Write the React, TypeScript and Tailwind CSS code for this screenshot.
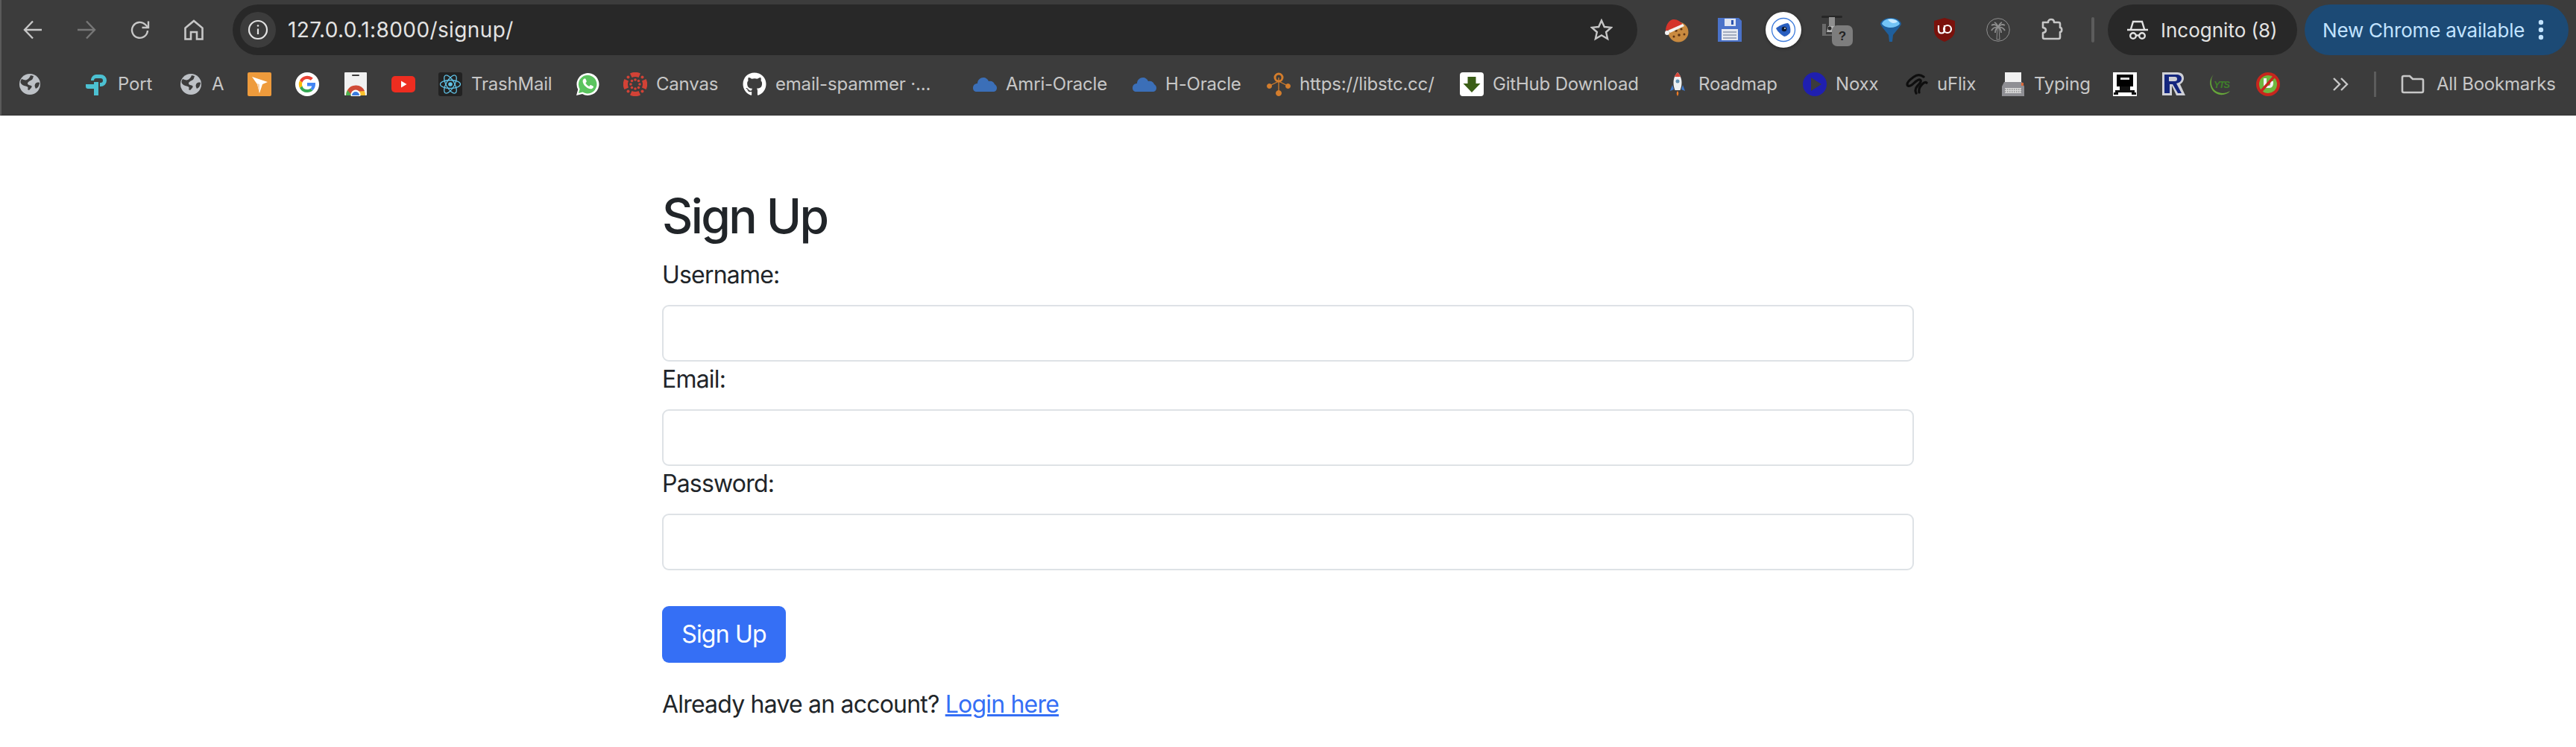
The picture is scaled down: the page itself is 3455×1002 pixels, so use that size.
import React from "react";
import { FaGithub } from "react-icons/fa";

const Globe = () => (
  <svg width="32" height="32" viewBox="0 0 32 32">
    <circle cx="16" cy="16" r="14" fill="#bdc1c6" />
    <path d="M5 9c3 1 5 2 7 1s4-3 5-6l4 1c-1 3-1 5-4 6-2 1-4 2-4 4s3 2 5 3-1 4-3 6l-2-1c1-2 1-3-1-4s-5-1-7-3-2-4 0-7z" fill="#3c3c3c" />
    <path d="M29 14c-3-1-5 0-6 2s0 4 1 6l3-2c1-2 2-4 2-6z" fill="#3c3c3c" />
  </svg>
);
const TpLink = () => (
  <svg width="32" height="32" viewBox="0 0 32 32">
    <path d="M15 3h6a8 8 0 0 1 8 8v0a8 8 0 0 1-8 8h-1v-5h1a3 3 0 0 0 0-6h-6z" fill="#4cc1d2" />
    <path d="M15 3h0v5c-2 0-3 1-3 3H8c0-4 3-8 7-8z" fill="#4cc1d2" />
    <path d="M1 16h11v-3h6v18h-6V22H4a3 3 0 0 1-3-3z" fill="#4cc1d2" />
  </svg>
);
const Orange = () => (
  <svg width="32" height="32" viewBox="0 0 32 32">
    <rect width="32" height="32" rx="2" fill="#ee9b3c" />
    <path d="M6 6l21 7-7 3-4 12-3-12z" fill="#fff" />
    <path d="M16 16l-3-1 3 13z" fill="#f6d3ad" />
  </svg>
);
const Google = () => (
  <svg width="32" height="32" viewBox="0 0 32 32">
    <circle cx="16" cy="16" r="16" fill="#fff" />
    <path d="M16 9a7 7 0 0 1 4.800 1.800l3-3A11.300 11.300 0 0 0 6 11l3.400 2.700A7 7 0 0 1 16 9z" fill="#ea4335" />
    <path d="M9.400 18.400L6 21a11.300 11.300 0 0 1 0-10l3.400 2.700a7 7 0 0 0 0 4.700z" fill="#fbbc05" />
    <path d="M16 23a7 7 0 0 1-6.600-4.600L6 21a11.300 11.300 0 0 0 10 6c3 0 5.600-1 7.500-2.800L20.300 21.700A7 7 0 0 1 16 23z" fill="#34a853" />
    <path d="M27 14H16v4.500h6.300a5.500 5.500 0 0 1-2 3.200l3.200 2.500c2.300-2 3.500-5 3.500-8.200 0-.7 0-1.300 0-2z" fill="#4285f4" />
  </svg>
);
const ChromeStore = () => (
  <svg width="32" height="32" viewBox="0 0 32 32">
    <rect width="30" height="31" x="1" fill="#f1f1f1" rx="1" />
    <rect x="11" y="3" width="10" height="2" rx="1" fill="#3c3c3c" />
    <path d="M3 31a13 13 0 0 1 26 0z" fill="#fbc02d" />
    <path d="M5 24a13 13 0 0 1 23 1l-12 1-7 5z" fill="#cf4b37" />
    <path d="M3 31c0-2.500 1-5 2-7l6 7z" fill="#4caf50" />
    <circle cx="16" cy="30" r="6.500" fill="#fff" />
    <path d="M11 31a5 5 0 0 1 10 0z" fill="#3a7ce0" />
  </svg>
);
const YouTube = () => (
  <svg width="32" height="32" viewBox="0 0 32 32">
    <rect x="0" y="5" width="32" height="22" rx="5" fill="#ee2d20" />
    <path d="M13 11.500v9l7.500-4.500z" fill="#fff" />
  </svg>
);
const ReactIcon = () => (
  <svg width="32" height="32" viewBox="0 0 32 32">
    <rect width="32" height="32" rx="3" fill="#222222" />
    <g fill="none" stroke="#61c4e8" strokeWidth="1.300">
      <ellipse cx="16" cy="16" rx="13.500" ry="5.500" />
      <ellipse cx="16" cy="16" rx="13.500" ry="5.500" transform="rotate(60 16 16)" />
      <ellipse cx="16" cy="16" rx="13.500" ry="5.500" transform="rotate(120 16 16)" />
    </g>
    <circle cx="16" cy="16" r="2.800" fill="#61c4e8" />
  </svg>
);
const WhatsApp = () => (
  <svg width="32" height="32" viewBox="0 0 32 32">
    <path d="M1 31l2.200-8A15 15 0 1 1 9 29z" fill="#fff" />
    <path d="M4 28l1.600-5.500A12.300 12.300 0 1 1 9.500 26.500z" fill="#5bc45f" />
    <path d="M11 9c1-1 2-1 2.500 0l1.200 2.800c.2.500 0 1-.4 1.400l-1 1.100c1 2 2.800 3.700 4.900 4.600l1.200-1.400c.4-.4.9-.5 1.400-.3l2.600 1.300c.6.300.7 1 .4 1.700-.7 1.500-2.500 2.300-4.200 2-5-1-9.500-5.500-10-10-.1-1.400.5-2.500 1.400-3.200z" fill="#fff" />
  </svg>
);
const Canvas = () => (
  <svg width="32" height="32" viewBox="0 0 32 32" fill="#d24236">
    <path d="M9 1.500a16 16 0 0 1 14 0L20.500 7a11 11 0 0 0-9 0z" />
    <path d="M9 30.500a16 16 0 0 0 14 0L20.500 25a11 11 0 0 1-9 0z" />
    <path d="M1.500 9a16 16 0 0 0 0 14L7 20.500a11 11 0 0 1 0-9z" />
    <path d="M30.500 9a16 16 0 0 1 0 14L25 20.500a11 11 0 0 0 0-9z" />
    <circle cx="16" cy="10" r="1.800" /><circle cx="16" cy="22" r="1.800" />
    <circle cx="10" cy="16" r="1.800" /><circle cx="22" cy="16" r="1.800" />
    <circle cx="6.500" cy="6.500" r="2" /><circle cx="25.500" cy="6.500" r="2" />
    <circle cx="6.500" cy="25.500" r="2" /><circle cx="25.500" cy="25.500" r="2" />
    <circle cx="11.500" cy="11.500" r="1.800" /><circle cx="20.500" cy="11.500" r="1.800" />
    <circle cx="11.500" cy="20.500" r="1.800" /><circle cx="20.500" cy="20.500" r="1.800" />
  </svg>
);
const Cloud = () => (
  <svg width="32" height="32" viewBox="0 0 32 32">
    <path d="M0 21c0-4 3-6 6-6 0-5 4-8 8-8 3 0 6 2 7 5 4-1 7 1 8 4 2 1 3 3 3 5 0 3-2 5-5 5H5c-3 0-5-2-5-5z" fill="#3b6fb8" />
  </svg>
);
const Mesh = () => (
  <svg width="32" height="32" viewBox="0 0 32 32" fill="#d37d2c" stroke="#d37d2c">
    <path d="M16 7v20M16 12L4 18M16 12l12 6" strokeWidth="1.300" fill="none" />
    <circle cx="16" cy="7" r="5" fill="none" strokeWidth="3" />
    <circle cx="16" cy="28" r="3.500" /><circle cx="3.500" cy="18.500" r="3" /><circle cx="28.500" cy="18.500" r="3" />
  </svg>
);
const GhDownload = () => (
  <svg width="32" height="32" viewBox="0 0 32 32">
    <rect width="32" height="32" rx="4" fill="#fff" />
    <path d="M10.500 6h11v9h6L16 27 4.500 15h6z" fill="#3b5e17" />
  </svg>
);
const Rocket = () => (
  <svg width="32" height="32" viewBox="0 0 32 32">
    <path d="M16 25c-2 2-1.500 5 0 7 1.500-2 2-5 0-7z" fill="#ef7b22" />
    <path d="M9 17l-3 8 5-2zM23 17l3 8-5-2z" fill="#3d78c9" />
    <path d="M16 0c-4 4-5.500 9-5.500 14 0 4 1 7 2 10h7c1-3 2-6 2-10 0-5-1.500-10-5.500-14z" fill="#eceff1" />
    <path d="M16 0c-2 2-3.200 4-4 6h8c-.8-2-2-4-4-6z" fill="#d9473a" />
    <circle cx="16" cy="12" r="2.500" fill="#5f8fb0" />
  </svg>
);
const Noxx = () => (
  <svg width="32" height="32" viewBox="0 0 32 32">
    <circle cx="16" cy="16" r="16" fill="#1f1fb0" />
    <path d="M11 7l14 9-14 9z" fill="#3c3c3c" />
  </svg>
);
const UFlix = () => (
  <svg width="32" height="32" viewBox="0 0 32 32" fill="none" stroke="#0e0e0e" strokeWidth="3.200" strokeLinecap="round">
    <path d="M26 6c-4-3-9-3-13 0-4 3-9 6-9 10 0 3 3 3 6 1 4-3 8-8 11-7 3 1 0 5-3 8-3 3-4 6-2 10" />
    <path d="M30 14c-2-2-4 0-6 2-3 3-5 6-4 11" />
  </svg>
);
const Typewriter = () => (
  <svg width="30" height="32" viewBox="0 0 30 32">
    <rect x="4" y="0" width="22" height="17" fill="#f1f1f1" />
    <path d="M3 13h24l3 6v13H0V19z" fill="#8f8f94" />
    <rect x="26" y="14" width="3" height="4" fill="#d9683a" />
    <rect x="4" y="21" width="22" height="7" fill="#d8d8d8" />
    <path d="M4 23h22M4 26h22" stroke="#6a6a6a" strokeWidth="1.200" strokeDasharray="1.500 1.500" />
  </svg>
);
const RobotIcon = () => (
  <svg width="32" height="32" viewBox="0 0 32 32">
    <rect width="32" height="32" fill="#fff" />
    <rect x="5" y="3" width="22" height="16" fill="#000" />
    <rect x="10" y="7" width="12" height="3" fill="#ddd" />
    <path d="M3 24h26v3H3zM1 27h6v3H1zM25 27h6v3h-6zM9 19h14v5H9z" fill="#111" />
  </svg>
);
const RLogo = () => (
  <svg width="32" height="32" viewBox="0 0 32 32">
    <path d="M1 0h20c7 0 9 4 9 8 0 4-3 7-5 8l7 15H20l-6-13v13H1z" fill="#cfd0d6" />
    <path d="M4 3h16c4 0 7 2 7 5 0 4-3 6-7 7l7 13h-5l-7-12h-4v12H4zm6 3v6h8c2 0 3-1 3-3s-1-3-3-3z" fill="#14267e" />
  </svg>
);
const Yts = () => (
  <svg width="32" height="32" viewBox="0 0 32 32">
    <path d="M6 3c-4 4-6 10-4 16 2 8 10 12 17 11 4-1 7-2 9-5-5 3-10 4-15 2C5 25 2 17 3 11c0-3 1-6 3-8z" fill="#66a63a" />
    <text x="6" y="21" fontFamily="'Liberation Sans',sans-serif" fontSize="13" fontStyle="italic" fontWeight="700" fill="#3f7f2a" textLength="22">YTS</text>
  </svg>
);
const Torrent = () => (
  <svg width="32" height="32" viewBox="0 0 32 32">
    <circle cx="16" cy="16" r="16" fill="#c8261d" />
    <circle cx="16" cy="16" r="12" fill="#6fb83f" />
    <path d="M10 8v8c0 3 2 5 5 5h3c3 0 5-3 5-6v-3h-4v4c0 1-1 2-2 2h-2c-1 0-1-1-1-2V8z" fill="#f2f2f2" />
    <path d="M24 6L7 25" stroke="#c8261d" strokeWidth="3.500" />
  </svg>
);

const Cookie = () => (
  <svg width="34" height="34" viewBox="0 0 34 34">
    <circle cx="20" cy="20" r="13.500" fill="#c98a3f" />
    <g fill="#5e3516"><circle cx="17" cy="18" r="1.800" /><circle cx="24" cy="16" r="1.600" /><circle cx="21" cy="24" r="1.800" /><circle cx="28" cy="23" r="1.500" /><circle cx="14" cy="26" r="1.500" /></g>
    <path d="M3 19C3 10 8 3 14 3c5 0 9 3 12 7L7 17z" fill="#d5342b" />
    <path d="M6 18l20-9 2 3-19 9z" fill="#f3f3f3" />
    <circle cx="5" cy="21" r="3" fill="#f3f3f3" />
  </svg>
);
const Floppy = () => (
  <svg width="32" height="32" viewBox="0 0 32 32">
    <path d="M0 0h28l4 4v28H0z" fill="#4a72c9" />
    <rect x="9" y="1" width="15" height="10" fill="#dfe5f2" />
    <rect x="18" y="3" width="3" height="6" fill="#2d55b0" />
    <rect x="5" y="15" width="22" height="15" fill="#e6e9f0" />
    <path d="M7 19h18M7 23h18M7 27h18" stroke="#8d98ae" strokeWidth="1.500" />
  </svg>
);
const EyeExt = () => (
  <div className="w-[48px] h-[48px] rounded-full bg-white flex items-center justify-center shadow-[0_1px_4px_rgba(0,0,0,0.4)]">
    <svg width="34" height="34" viewBox="0 0 34 34">
      <circle cx="17" cy="17" r="15.500" fill="none" stroke="#3d7bdc" strokeWidth="1.300" />
      <path d="M7 15c3-3 11-7 16-7 3 2 4 9 3 13-2 2-5 5-8 5-4-2-9-7-11-11z" fill="#2a5fc0" />
      <circle cx="18" cy="16" r="3.300" fill="#0d1a33" />
      <circle cx="19" cy="15" r="0.900" fill="#fff" />
    </svg>
  </div>
);
const BlockedExt = () => (
  <svg width="44" height="44" viewBox="0 0 44 44">
    <rect x="1" y="3" width="28" height="3" rx="1.500" fill="#262626" />
    <rect x="11" y="5" width="8" height="14" fill="#8f8f8f" />
    <path d="M2 14h5v16H2zM7 28h12v2H7z" fill="#6a6a6a" />
    <path d="M8 25h10l2-8H10z" fill="#b5b5b5" />
    <circle cx="12" cy="20" r="2.500" fill="#2c2c2c" />
    <rect x="15" y="16" width="28" height="28" rx="7" fill="#7d7d7d" />
    <text x="29" y="36" textAnchor="middle" fontFamily="'Liberation Sans',sans-serif" fontSize="17" fontWeight="700" fill="#222">?</text>
  </svg>
);
const Funnel = () => (
  <svg width="28" height="32" viewBox="0 0 28 32">
    <path d="M0 8C1 3 7 0 14 0s13 3 14 8c0 2-8 11-11 15l-1 9h-4l-1-9C8 19 0 10 0 8z" fill="#1f5f9c" />
    <path d="M2 8C3 4 8 1 14 1s11 3 12 7c-2 3-7 5-12 5S4 11 2 8z" fill="#73c4f6" />
    <path d="M10 2c4-1 10 0 13 3-4 3-9 3-13-3z" fill="#c9eaff" />
  </svg>
);
const UBlock = () => (
  <svg width="30" height="32" viewBox="0 0 30 32">
    <path d="M15 0l14 4v12c0 8-6 13-14 16C7 29 1 24 1 16V4z" fill="#7a120c" />
    <path d="M7 10v6c0 3 1.500 4.500 4 4.500s4-1.500 4-4.500v-6" fill="none" stroke="#fff" strokeWidth="2.200" />
    <circle cx="19" cy="15" r="5" fill="none" stroke="#fff" strokeWidth="2.200" />
  </svg>
);
const Palm = () => (
  <svg width="32" height="32" viewBox="0 0 32 32" fill="none" stroke="#8f8f8f" strokeWidth="1">
    <circle cx="16" cy="16" r="15.300" />
    <path d="M15 13h2l1 16h-4z" />
    <path d="M16 13c-2-4-6-5-9-3M16 13c-3-1-7 0-9 4M16 13c-2 0-4 3-4 7M16 13c2-4 6-5 9-3M16 13c3-1 7 0 9 4M16 13c2 0 4 3 4 7M16 13c-1-4-3-6-5-7M16 13c1-4 3-6 5-7" strokeWidth="1.800" />
  </svg>
);
const Puzzle = () => (
  <svg width="30" height="32" viewBox="0 0 30 32" fill="none" stroke="#c7c7c7" strokeWidth="2.600" strokeLinejoin="round">
    <path d="M3 6h7c0-3 2-4 4-4s4 1 4 4h6a2 2 0 0 1 2 2v5c3 0 3 6 0 6v7a2 2 0 0 1-2 2H5a2 2 0 0 1-2-2v-6c3-.5 4-2 4-3.500S6 13.500 3 13z" />
  </svg>
);

const bookmarks: [string, React.ReactNode, string][] = [
  ["w-[90px]", <Globe />, ""],
  ["w-[126px]", <TpLink />, "Port"],
  ["w-[92px]", <Globe />, "A"],
  ["w-[64px]", <Orange />, ""],
  ["w-[65px]", <Google />, ""],
  ["w-[64px]", <ChromeStore />, ""],
  ["w-[63px]", <YouTube />, ""],
  ["w-[184px]", <ReactIcon />, "TrashMail"],
  ["w-[64px]", <WhatsApp />, ""],
  ["w-[160px]", <Canvas />, "Canvas"],
  ["w-[309px]", <FaGithub size={32} color="#ffffff" />, "email-spammer ·..."],
  ["w-[214px]", <Cloud />, "Amri-Oracle"],
  ["w-[180px]", <Cloud />, "H-Oracle"],
  ["w-[259px]", <Mesh />, "https://libstc.cc/"],
  ["w-[276px]", <GhDownload />, "GitHub Download"],
  ["w-[184px]", <Rocket />, "Roadmap"],
  ["w-[136px]", <Noxx />, "Noxx"],
  ["w-[130px]", <UFlix />, "uFlix"],
  ["w-[150px]", <Typewriter />, "Typing"],
  ["w-[65px]", <RobotIcon />, ""],
  ["w-[64px]", <RLogo />, ""],
  ["w-[63px]", <Yts />, ""],
  ["w-[102px]", <Torrent />, ""],
];

const exts: React.ReactNode[] = [<Cookie />, <Floppy />, <EyeExt />, <BlockedExt />, <Funnel />, <UBlock />, <Palm />, <Puzzle />];

const label = "block text-[32px] leading-[48px] mb-[16px] tracking-[-0.8px]";
const field = "block w-full h-[76px] rounded-[9px] border-2 border-[#dee2e6] bg-white";

export default function App() {
  return (
    <div className="min-h-[1002px] bg-white font-['Inter','Liberation_Sans',sans-serif] text-[#212529]">
      <header className="h-[155px] bg-[#3c3c3c] border-l-2 border-b border-l-[#5a5a5a] border-b-[#333333]">
        <div className="h-[80px] flex items-center pl-[6px]">
          <div className="w-[72px] flex justify-center">
            <svg width="26" height="26" viewBox="0 0 26 26" fill="none" stroke="#c7c7c7" strokeWidth="2.400"><path d="M25 13H2M13 1.500L2 13l11 11.500" /></svg>
          </div>
          <div className="w-[72px] flex justify-center">
            <svg width="26" height="26" viewBox="0 0 26 26" fill="none" stroke="#777777" strokeWidth="2.400"><path d="M1 13h23M13 1.500L24 13 13 24.500" /></svg>
          </div>
          <div className="w-[72px] flex justify-center">
            <svg width="26" height="26" viewBox="0 0 26 26" fill="none" stroke="#c7c7c7" strokeWidth="2.400"><path d="M23 14a10.500 10.500 0 1 1-3-8l3 3" /><path d="M24 1.500V10h-8.500" /></svg>
          </div>
          <div className="w-[72px] flex justify-center">
            <svg width="26" height="28" viewBox="0 0 26 28" fill="none" stroke="#c7c7c7" strokeWidth="2.600"><path d="M1.500 26.500V11.500L13 2l11.500 9.500v15H17V17H9v9.500z" /></svg>
          </div>
          <div className="ml-[16px] w-[1884px] h-[68px] rounded-full bg-[#282828] flex items-center pl-[10px] pr-[33px]">
            <div className="w-[48px] h-[48px] rounded-full bg-[#3c3c3c] flex items-center justify-center shrink-0">
              <svg width="28" height="28" viewBox="0 0 28 28" fill="none" stroke="#e3e3e3" strokeWidth="2.200"><circle cx="14" cy="14" r="12" /><path d="M14 12.500V20" /><circle cx="14" cy="8.500" r="1.300" fill="#e3e3e3" stroke="none" /></svg>
            </div>
            <span className="ml-[16px] text-[28px] tracking-[0.4px] text-[#e3e3e3]">127.0.0.1:8000/signup/</span>
            <svg className="ml-auto" width="30" height="30" viewBox="0 0 30 30" fill="none" stroke="#c7c7c7" strokeWidth="2.400"><path d="M15 2.500l3.800 8.500 9.200.9-6.900 6.100 2 9L15 22.300 6.900 27l2-9L2 11.900l9.200-.9z" /></svg>
          </div>
          <div className="ml-[16px] flex items-center">
            {exts.map((e, i) => (
              <div key={i} className="w-[72px] h-[64px] flex items-center justify-center">{e}</div>
            ))}
          </div>
          <div className="ml-[17px] w-[4px] h-[34px] rounded-full bg-[#5c5c5c]" />
          <div className="ml-[18px] w-[254px] h-[68px] rounded-full bg-[#282828] flex items-center pl-[26px]">
            <svg width="28" height="28" viewBox="0 0 28 28" fill="none" stroke="#e3e3e3" strokeWidth="2.400"><path d="M0 14h28M5 13L8 3h12l3 10" /><circle cx="8" cy="22" r="3.800" /><circle cx="20" cy="22" r="3.800" /><path d="M11.500 21.500h5" /></svg>
            <span className="ml-[17px] text-[26px] text-[#e3e3e3]">Incognito (8)</span>
          </div>
          <div className="ml-[10px] w-[354px] h-[68px] rounded-full bg-[#1c4a75] flex items-center pl-[24px]">
            <span className="text-[26px] tracking-[-0.2px] text-[#c2e3ff]">New Chrome available</span>
            <svg className="ml-[18px]" width="8" height="28" viewBox="0 0 8 28" fill="#c2e3ff"><circle cx="4" cy="4" r="3.200" /><circle cx="4" cy="14" r="3.200" /><circle cx="4" cy="24" r="3.200" /></svg>
          </div>
        </div>
        <div className="h-[66px] flex items-center pl-[22px]">
          {bookmarks.map(([w, icon, text], i) => (
            <div key={i} className={`${w} flex items-center gap-[12px] shrink-0`}>
              <span className="w-[32px] h-[32px] flex items-center justify-center shrink-0">{icon}</span>
              {text && <span className="text-[24px] tracking-[-0.2px] whitespace-nowrap text-[#c7c7c7]">{text}</span>}
            </div>
          ))}
          <svg width="22" height="20" viewBox="0 0 22 20" fill="none" stroke="#c7c7c7" strokeWidth="2.400"><path d="M2 2l8 8-8 8M12 2l8 8-8 8" /></svg>
          <div className="ml-[34px] w-[3px] h-[34px] bg-[#5c5c5c]" />
          <svg className="ml-[33px]" width="32" height="28" viewBox="0 0 32 28" fill="none" stroke="#c7c7c7" strokeWidth="2.600"><path d="M2 5a2 2 0 0 1 2-2h8l4 4h12a2 2 0 0 1 2 2v14a2 2 0 0 1-2 2H4a2 2 0 0 1-2-2z" /></svg>
          <span className="ml-[16px] text-[24px] tracking-[-0.2px] whitespace-nowrap text-[#c7c7c7]">All Bookmarks</span>
        </div>
      </header>
      <main className="w-[1679px] mx-auto pt-[97px]">
        <h2 className="text-[64px] leading-[76.8px] font-medium tracking-[-2.6px] mb-[16px]">Sign Up</h2>
        <form>
          <label className={label}>Username:</label>
          <input className={field} />
          <label className={label}>Email:</label>
          <input className={field} />
          <label className={label}>Password:</label>
          <input className={field} />
          <button type="button" className="block mt-[48px] w-[166px] h-[76px] rounded-[9px] bg-[#356ff5] text-white text-[32px] tracking-[-0.8px]">Sign Up</button>
        </form>
        <p className="mt-[32px] text-[32px] leading-[48px] tracking-[-0.8px]">
          Already have an account? <a className="text-[#356ff5] underline" href="#">Login here</a>
        </p>
      </main>
    </div>
  );
}
